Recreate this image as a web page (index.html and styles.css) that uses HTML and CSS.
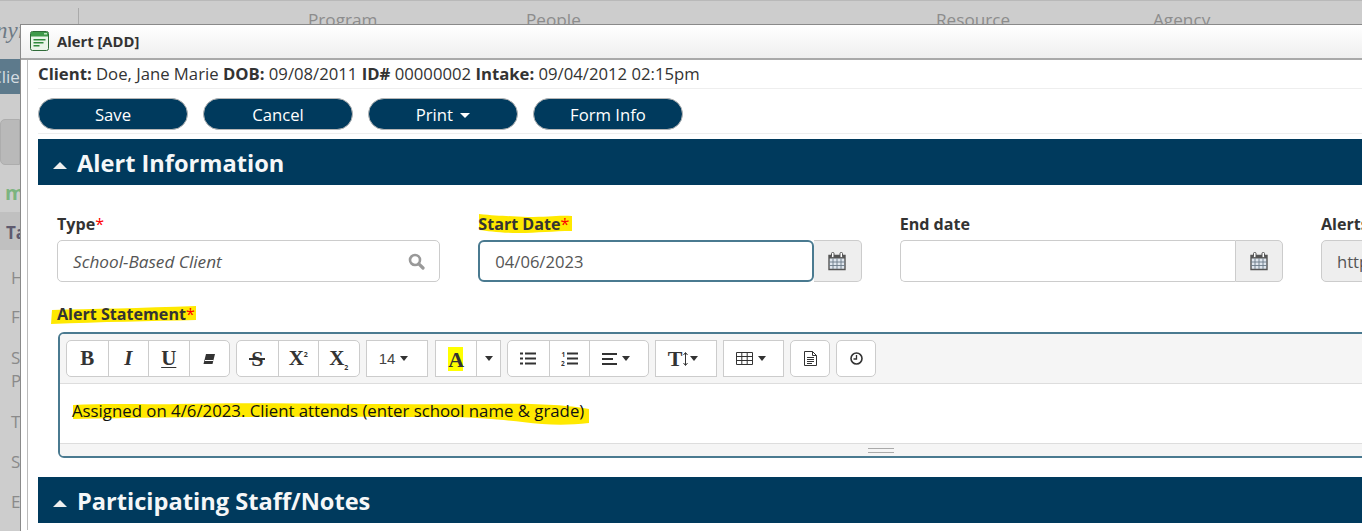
FILE: index.html
```html
<!DOCTYPE html>
<html lang="en">
<head>
<meta charset="utf-8">
<title>Alert [ADD]</title>
<link rel="stylesheet" href="styles.css">
</head>
<body>
<div class="page">
  <header class="topnav">
    <span class="topnav-sep"></span>
    <nav class="topnav-items"><span>Program</span><span>People</span><span>Resource</span><span>Agency</span></nav>
  </header>
  <aside class="side">
    <div class="side-brand">nyi</div>
    <div class="side-client">Client</div>
    <div class="side-tab"></div>
    <div class="side-green">m</div>
    <div class="side-task">Tasks</div>
    <ul class="side-list">
      <li class="s1">Home</li>
      <li class="s2">Forms</li>
      <li class="s3">Staff<br>Plan</li>
      <li class="s4">Tools</li>
      <li class="s5">Staff</li>
      <li class="s6">Edit</li>
    </ul>
  </aside>
</div>

<section class="window">
  <div class="titlebar">
    <svg class="title-icon" width="19" height="20" viewBox="0 0 19 20"><rect x="0.500" y="0.500" width="18" height="19" rx="2" fill="#eaf5ea" stroke="#2f6b38"/><rect x="1" y="1" width="17" height="4.500" fill="#3f9a4a"/><rect x="14" y="2" width="3" height="1.500" fill="#bfe6c2"/><rect x="3.500" y="8" width="12" height="1.500" fill="#2f8a3c"/><rect x="3.500" y="11" width="10" height="1.500" fill="#2f8a3c"/><rect x="3.500" y="14" width="6" height="1.500" fill="#2f8a3c"/></svg>
    <span class="title-text">Alert [ADD]</span>
  </div>
  <div class="frame">
    <div class="client"><b>Client:</b> Doe, Jane Marie <b>DOB:</b> 09/08/2011 <b>ID#</b> 00000002 <b>Intake:</b> 09/04/2012 02:15pm</div>
    <div class="actions">
      <button class="pill">Save</button>
      <button class="pill">Cancel</button>
      <button class="pill">Print <i class="caret-w"></i></button>
      <button class="pill">Form Info</button>
    </div>
    <h2 class="section"><i class="tri"></i>Alert Information</h2>
    <div class="form">
      <div class="fields">
        <div class="field">
          <label class="lbl">Type<em>*</em></label>
          <div class="ctl"><span class="val ital">School-Based Client</span>
            <svg class="search" width="17" height="17" viewBox="0 0 17 17"><circle cx="7" cy="7" r="5" fill="none" stroke="#999" stroke-width="2.600"/><path d="M10.800 10.800 15 15" stroke="#999" stroke-width="3.200" stroke-linecap="round"/></svg>
          </div>
        </div>
        <div class="field">
          <label class="lbl hl-wrap">
            <svg class="marker mk-date" width="95" height="21" viewBox="0 0 95 21"><path d="M1 1C20 3 30 3 50 4 70 4 80 2 94 3V18C75 18 60 20 40 20 22 20 10 18 1 17Z"/></svg>
            <span class="lbl-t">Start Date<em>*</em></span></label>
          <div class="group">
            <div class="ctl focus"><span class="val">04/06/2023</span></div>
            <span class="addon"><svg width="18" height="19" viewBox="0 0 18 19"><use href="#cal"/></svg></span>
          </div>
        </div>
        <div class="field">
          <label class="lbl">End date</label>
          <div class="group">
            <div class="ctl join"></div>
            <span class="addon bl"><svg width="18" height="19" viewBox="0 0 18 19"><use href="#cal"/></svg></span>
          </div>
        </div>
        <div class="field">
          <label class="lbl">Alerts</label>
          <div class="ctl ro"><span class="val">http://</span></div>
        </div>
      </div>
      <label class="lbl stmt hl-wrap">
        <svg class="marker mk-stmt" width="146" height="20" viewBox="0 0 146 20"><path d="M1 5C40 4 90 3 145 1V15C100 16 50 17 0 19Z"/></svg>
        <span class="lbl-t">Alert Statement<em>*</em></span></label>
      <div class="editor">
        <div class="toolbar">
          <div class="bg"><button class="tb"><span class="g g-b">B</span></button><button class="tb"><span class="g g-i">I</span></button><button class="tb"><span class="g g-u">U</span></button><button class="tb"><svg width="14" height="12" viewBox="0 0 14 12"><path d="M4 1H13L10.500 11H1.500Z" fill="#333"/><path d="M3 7.500H11.500" stroke="#fff" stroke-width="1"/></svg></button></div>
          <div class="bg"><button class="tb"><span class="g g-s">S</span></button><button class="tb"><span class="g g-x">X<sup>2</sup></span></button><button class="tb"><span class="g g-x">X<sub>2</sub></span></button></div>
          <div class="bg sq"><button class="tb w60 trim"><span class="num">14</span><i class="caret"></i></button></div>
          <div class="bg sq push"><button class="tb"><span class="g g-a">A</span></button><button class="tb w24"><i class="caret nm"></i></button></div>
          <div class="bg"><button class="tb"><svg width="16" height="13" viewBox="0 0 16 13"><path d="M0 1.500H3M5 1.500H16M0 6.500H3M5 6.500H16M0 11.500H3M5 11.500H16" stroke="#333" stroke-width="2"/></svg></button><button class="tb"><svg width="17" height="15" viewBox="0 0 17 15"><path d="M6 2.500H17M6 7.500H17M6 12.500H17" stroke="#333" stroke-width="2"/><text x="0.500" y="6" class="tiny">1</text><text x="0" y="14.500" class="tiny">2</text></svg></button><button class="tb w59 trim"><svg width="15" height="12" viewBox="0 0 15 12"><path d="M0 1H15M0 6H11M0 11H15" stroke="#333" stroke-width="2"/></svg><i class="caret"></i></button></div>
          <div class="bg sq"><button class="tb w60 trim"><span class="g g-t">T</span><svg class="updown" width="5" height="14" viewBox="0 0 5 14"><path d="M2.500 1V13M0.500 3 2.500 0.500 4.500 3M0.500 11 2.500 13.500 4.500 11" fill="none" stroke="#333" stroke-width="1"/></svg><i class="caret tight"></i></button></div>
          <div class="bg sq"><button class="tb w59 trim"><svg width="17" height="13" viewBox="0 0 17 13"><path d="M.5.500H16.500V12.500H.5ZM.5 4.500H16.500M.5 8.500H16.500M5.800.500V12.500M11.200.500V12.500" fill="none" stroke="#333"/></svg><i class="caret"></i></button></div>
          <div class="bg"><button class="tb w38"><svg width="13" height="15" viewBox="0 0 13 15"><path d="M.5.500H8.500L12.500 4.500V14.500H.5Z" fill="#fff" stroke="#333"/><path d="M8.500.500V4.500H12.500" fill="none" stroke="#333"/><path d="M3 6.500H10M3 8.500H10M3 10.500H10M3 12.500H8" stroke="#333"/></svg></button></div>
          <div class="bg"><button class="tb w38"><svg width="13" height="13" viewBox="0 0 13 13"><circle cx="6.500" cy="6.500" r="5.500" fill="none" stroke="#333" stroke-width="1.600"/><path d="M6.500 3V7H3.500" fill="none" stroke="#333" stroke-width="1.300"/></svg></button></div>
        </div>
        <div class="edit-area">
          <svg class="marker mk-text" width="518" height="24" viewBox="0 0 518 24"><path d="M1 3C40 1 80 3 102 2 200 0 300 3 420 2 470 1 500 4 517 7V21C500 23 485 23 470 22 440 19 420 16 380 15 250 15 120 14 1 17Z"/></svg>
          <p class="edit-text">Assigned on 4/6/2023. Client attends (enter school name &amp; grade)</p>
        </div>
        <div class="statusbar"><span class="grip"></span></div>
      </div>
    </div>
    <h2 class="section"><i class="tri"></i>Participating Staff/Notes</h2>
  </div>
</section>

<svg class="defs" width="0" height="0">
  <symbol id="cal" viewBox="0 0 18 19">
    <path d="M1 3.500H17V17.500H1Z" fill="#dfe6ee" stroke="#555" stroke-width="1.400"/>
    <rect x="1" y="3" width="16" height="3.500" fill="#555"/>
    <path d="M1 10H17M1 13.500H17M5 6.500V17M9 6.500V17M13 6.500V17" stroke="#6b7b88" stroke-width="0.900"/>
    <rect x="3.500" y="0.500" width="2.500" height="5" rx="1" fill="#fff" stroke="#555"/>
    <rect x="12" y="0.500" width="2.500" height="5" rx="1" fill="#fff" stroke="#555"/>
  </symbol>
</svg>
</body>
</html>
```
FILE: styles.css
```css
* { box-sizing: border-box; }
html, body { margin: 0; height: 531px; overflow: hidden; }
body { background: #cdcdcd; font-family: "Open Sans", "Noto Sans", sans-serif; color: #333; position: relative; }

.page { border-top: 1px solid #b9b9b9; color: #8c8c8c; }
.topnav { position: relative; height: 23px; overflow: hidden; }
.topnav-sep { position: absolute; left: 78px; top: 7px; bottom: 0; width: 1px; background: #aaa; }
.topnav-items { display: grid; grid-template-columns: 218px 410px 217px auto; padding: 8px 0 0 308px; font-size: 17.200px; line-height: 22px; }

.side { width: 20px; overflow: hidden; font-size: 15px; line-height: 20px; white-space: nowrap; }
.side-brand { margin-top: -3px; height: 20px; font-family: "Liberation Serif", serif; font-style: italic; font-size: 23px; color: #6d7a85; text-indent: -4px; }
.side-client { margin-top: 18px; height: 35px; background: #5d7a8c; color: #d5dde2; line-height: 35px; text-indent: -9px; font-size: 17px; }
.side-tab { margin-top: 25px; height: 46px; background: #b9b9b9; border-radius: 5px 0 0 5px; border: 1px solid #adadad; }
.side-green { margin-top: 18px; height: 20px; color: #7cb47f; font-weight: 700; font-size: 20px; line-height: 20px; text-indent: 5px; }
.side-task { height: 38px; margin-top: 9px; background: #c0c0c0; color: #5e5a6e; font-weight: 700; font-size: 17px; line-height: 42px; text-indent: 6px; }
.side-list { list-style: none; margin: 0; padding: 0 0 0 11px; color: #8a8a8a; font-size: 17px; line-height: 23px; }
.side-list li { margin-top: 16px; }
.side-list .s3 { margin-top: 18px; }
.side-list .s4 { margin-top: 18px; }
.side-list .s5 { margin-top: 17px; }
.side-list .s6 { margin-top: 17px; }

.window { position: absolute; left: 20px; top: 24px; width: 1400px; height: 520px; background: #fff; border: 1px solid #8a8a8a; border-right: 0; padding: 0 0 0 6px; }
.titlebar { display: flex; align-items: center; height: 35px; margin-left: -6px; padding: 0 0 1px 9px; background: linear-gradient(#fff, #efefef); border-bottom: 2px solid #a9a9a9; }
.title-icon { margin-right: 8px; }
.title-text { font-size: 14.800px; font-weight: 700; color: #333; }
.frame { border-left: 1px solid #bbb; height: 470px; padding: 0 0 0 10px; }

.client { height: 29px; border-bottom: 1px solid #eee; font-size: 16.700px; line-height: 28px; color: #333; white-space: nowrap; }
.client b { font-weight: 700; }

.actions { display: flex; gap: 15px; height: 45px; padding-top: 9px; border-bottom: 1px solid #eee; }
.pill { width: 150px; height: 32px; border-radius: 16px; background: #003a5d; border: 1px solid #b5b5b5; color: #fff; font: 400 16.700px/30px "Open Sans", sans-serif; padding: 1px 0 0; }
.caret-w { display: inline-block; border: 5px solid transparent; border-top-color: #fff; border-bottom: 0; margin-left: 3px; vertical-align: 3px; }

.section { display: flex; align-items: center; height: 46px; margin: 0; background: #003a5d; color: #f5f7f8; font-size: 23.600px; font-weight: 700; padding: 1px 0 0 15px; }
.actions + .section { margin-top: 5px; }
.tri { width: 0; height: 0; border: 7.500px solid transparent; border-top: 0; border-bottom: 7px solid #eee; margin-right: 10px; margin-top: 6px; }

.form { padding: 28px 0 0 19px; height: 292px; }
.fields { display: grid; grid-template-columns: repeat(4, 383.330px); column-gap: 38px; }
.lbl { display: block; font-size: 16.100px; font-weight: 700; line-height: 22px; color: #333; height: 27px; position: relative; }
.lbl em { color: #f00; font-style: normal; font-weight: 400; }
.hl-wrap { position: relative; }
.lbl-t { position: relative; }
.marker { position: absolute; fill: #ffe900; }
.mk-date { left: 0; top: 0; }
.mk-stmt { left: -6px; top: 2px; }
.mk-text { left: 12px; top: 18px; }

.ctl { display: flex; align-items: center; justify-content: space-between; height: 42px; border: 1px solid #ccc; border-radius: 5px; padding: 0 15px; background: #fff; flex: 1; }
.val { font-size: 16.600px; color: #555; }
.ital { font-style: italic; font-size: 17.200px; }
.search { margin-right: -1px; }
.group { display: flex; }
.focus { border: 2px solid #4a7a90; border-radius: 6px; padding-left: 15px; }
.join { border-radius: 5px 0 0 5px; border-right: 0; }
.addon { display: flex; align-items: center; justify-content: center; width: 48px; height: 42px; background: #eee; border: 1px solid #ccc; border-left: 0; border-radius: 0 5px 5px 0; }
.bl { border-left: 1px solid #ccc; }
.ro { background: #eee; }

.stmt { margin-top: 21px; height: 29px; }
.editor { position: relative; margin-left: 1px; width: 1340px; height: 126px; border: 2px solid #4a7a90; border-radius: 6px; display: flex; flex-direction: column; background: #fff; }
.toolbar { display: flex; gap: 6px; height: 50px; flex: none; padding: 6px 0 0 6px; background: #f5f5f5; border-bottom: 1px solid #ddd; border-radius: 4px 0 0 0; }
.bg { display: flex; height: 37px; border: 1px solid #ccc; border-radius: 5px; background: #fff; }
.sq { border-radius: 0; }
.push { margin-left: 1px; }
.tb { display: flex; align-items: center; justify-content: center; width: 40.500px; height: 100%; padding: 0; background: transparent; border: 0; border-left: 1px solid #ccc; color: #333; }
.tb:first-child { border-left: 0; }
.trim { padding-right: 6px; }
.w60 { width: 60px; }
.w59 { width: 59px; }
.w38 { width: 38px; }
.w24 { width: 24px; }
.g { font-family: "Liberation Serif", serif; font-weight: 700; line-height: 1; }
.g-b, .g-u { font-size: 21px; }
.g-u { text-decoration: underline; text-underline-offset: 2px; text-decoration-thickness: 1px; }
.g-i { font-size: 21px; font-style: italic; }
.g-s { font-size: 22px; padding: 0 2px; background: linear-gradient(#333, #333) center / 100% 2px no-repeat; }
.g-x { font-size: 21px; position: relative; }
.g-x sup, .g-x sub { font-size: 7px; font-family: "Open Sans", sans-serif; line-height: 0; }
.g-a { font-size: 22px; background: #ff0; padding: 2px 0 0; width: 15px; text-align: center; }
.g-t { font-size: 22px; }
.updown { margin: 0 0 0 1px; }
.num { font-size: 15px; color: #444; }
.tiny { font: 700 6.500px "Open Sans", sans-serif; fill: #333; }
.caret { display: inline-block; border: 4px solid transparent; border-top: 5px solid #333; border-bottom: 0; margin-left: 5px; }
.nm { margin: 0; }
.tight { margin-left: 2px; }

.edit-area { position: relative; height: 59px; flex: none; }
.edit-text { position: relative; margin: 0; padding: 16px 0 0 12px; font-size: 16.800px; line-height: 22px; color: #111; white-space: nowrap; }
.statusbar { flex: 1; background: #f5f5f5; border-top: 1px solid #ddd; padding: 4px 0 0 808px; border-radius: 0 0 0 4px; }
.grip { display: block; width: 26px; height: 5px; border-top: 1px solid #aaa; border-bottom: 1px solid #aaa; }

.defs { position: absolute; }
```
